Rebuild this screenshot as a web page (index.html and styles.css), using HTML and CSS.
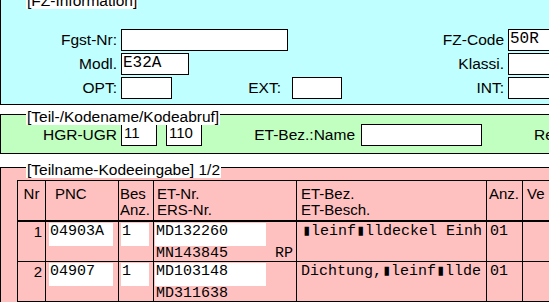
FILE: index.html
```html
<!DOCTYPE html>
<html lang="de">
<head>
<meta charset="utf-8">
<title>FZ-Information</title>
<link rel="stylesheet" href="styles.css">
</head>
<body>
<div class="page">
  <section class="group group-fz">
    <span class="legend">[FZ-Information]</span>
    <div class="row">
      <span class="lbl w116">Fgst-Nr:</span><span class="field mono w167"></span>
      <span class="lbl w216">FZ-Code</span><span class="field mono w45">50R</span>
    </div>
    <div class="row">
      <span class="lbl w116">Modl.</span><span class="field mono w68">E32A</span>
      <span class="lbl w315">Klassi.</span><span class="field mono w45"></span>
    </div>
    <div class="row">
      <span class="lbl w116">OPT:</span><span class="field mono w51"></span>
      <span class="lbl w109 gap11">EXT:</span><span class="field mono w50"></span>
      <span class="lbl w162">INT:</span><span class="field mono w45"></span>
    </div>
  </section>

  <section class="group group-kode">
    <span class="legend">[Teil-/Kodename/Kodeabruf]</span>
    <div class="row">
      <span class="lbl w116">HGR-UGR</span><span class="field sans w36">11</span>
      <span class="field sans w36 ml9">110</span>
      <span class="lbl w153 gap6">ET-Bez.:Name</span><span class="field sans w121"></span>
      <span class="lbl ml52">Re</span>
    </div>
  </section>

  <section class="group group-teil">
    <span class="legend">[Teilname-Kodeeingabe] 1/2</span>
    <div class="grid">
      <div class="hd center">Nr</div>
      <div class="hd pl9">PNC</div>
      <div class="hd pl1">Bes<br>Anz.</div>
      <div class="hd pl3">ET-Nr.<br>ERS-Nr.</div>
      <div class="hd pl4">ET-Bez.<br>ET-Besch.</div>
      <div class="hd pl2">Anz.</div>
      <div class="hd pl4">Ve</div>

      <div class="cell num">1</div>
      <div class="cell"><div class="box mono ml3 w64">04903A</div></div>
      <div class="cell"><div class="box mono ml2 w28">1</div></div>
      <div class="cell">
        <div class="box mono ml1 w111">MD132260</div>
        <div class="sub mono"><span>MN143845</span><span>RP</span></div>
      </div>
      <div class="cell mono pl5">▮leinf▮lldeckel Einh</div>
      <div class="cell mono pl3">01</div>
      <div class="cell"></div>

      <div class="cell num">2</div>
      <div class="cell"><div class="box mono ml3 w64">04907</div></div>
      <div class="cell"><div class="box mono ml2 w28">1</div></div>
      <div class="cell">
        <div class="box mono ml1 w111">MD103148</div>
        <div class="sub mono"><span>MD311638</span></div>
      </div>
      <div class="cell mono pl4">Dichtung,▮leinf▮llde</div>
      <div class="cell mono pl3">01</div>
      <div class="cell"></div>
    </div>
  </section>
</div>
</body>
</html>
```

FILE: styles.css
```css
html, body {
  margin: 0;
  padding: 0;
  background: #ffffff;
  overflow: hidden;
}

body {
  font-family: "Liberation Sans", Arial, sans-serif;
  color: #000000;
}

.page {
  width: 620px;
}

.group {
  position: relative;
  border: 1px solid #000000;
  width: 618px;
}

.group-fz {
  margin-top: -2px;
  background: #c0ffff;
  padding: 30px 0 5px 0;
  display: flex;
  flex-direction: column;
  gap: 2px;
}

.group-kode {
  margin-top: 9px;
  background: #c0ffc0;
  padding: 9px 0 7px 0;
}

.group-teil {
  margin-top: 13px;
  background: #ffc0c0;
  padding: 12px 0 0 16px;
  width: 602px;
  height: 200px;
}

.legend {
  position: absolute;
  top: -6px;
  left: 25px;
  padding: 0 1px;
  background: #ffffff;
  font-size: 15.5px;
  line-height: 16px;
  white-space: nowrap;
}

.row {
  display: flex;
  align-items: flex-start;
  height: 22px;
}

.lbl {
  flex: 0 0 auto;
  font-size: 15.5px;
  line-height: 22px;
  text-align: right;
  white-space: nowrap;
  margin-right: 4px;
}

.field {
  flex: 0 0 auto;
  box-sizing: border-box;
  height: 22px;
  border: 1px solid #000000;
  background: #ffffff;
  white-space: nowrap;
  overflow: hidden;
}

.field.mono {
  font-family: "Liberation Mono", "Courier New", monospace;
  font-size: 16px;
  line-height: 18px;
  padding-left: 1px;
}

.field.sans {
  font-size: 15px;
  line-height: 16px;
  padding-left: 2px;
}

.w116 { width: 116px; }
.w216 { width: 216px; }
.w315 { width: 315px; }
.w109 { width: 109px; }
.w162 { width: 162px; }
.w153 { width: 153px; }
.w167 { width: 167px; }
.w68 { width: 68px; }
.w51 { width: 51px; }
.w50 { width: 50px; }
.w45 { width: 45px; }
.w36 { width: 36px; }
.w121 { width: 121px; }
.w64 { width: 64px; }
.w28 { width: 28px; }
.w111 { width: 111px; }

.gap11 { margin-right: 11px; }
.gap6 { margin-right: 6px; }
.ml9 { margin-left: 9px; }
.ml52 { margin-left: 52px; }
.ml3 { margin-left: 3px; }
.ml2 { margin-left: 2px; }
.ml1 { margin-left: 1px; }

/* parts table */
.grid {
  display: grid;
  grid-template-columns: 28px 73px 35px 143px 190px 36px 80px;
  grid-template-rows: 41px 40px 40px;
  border-top: 1px solid #000000;
  border-left: 1px solid #000000;
  width: max-content;
}

.hd,
.cell {
  box-sizing: border-box;
  border-right: 1px solid #000000;
  border-bottom: 1px solid #000000;
  white-space: nowrap;
  overflow: hidden;
}

.hd {
  border-bottom-width: 2px;
  font-size: 15px;
  line-height: 16px;
  padding-top: 5px;
}

.cell {
  font-size: 15px;
  line-height: 18px;
  padding-top: 1px;
}

.center { text-align: center; }
.pl1 { padding-left: 1px; }
.pl2 { padding-left: 2px; }
.pl3 { padding-left: 3px; }
.pl4 { padding-left: 4px; }
.pl5 { padding-left: 5px; }
.pl9 { padding-left: 9px; }

.num {
  text-align: right;
  padding-right: 3px;
}

.mono {
  font-family: "Liberation Mono", "DejaVu Sans Mono", "Courier New", monospace;
}

.box {
  box-sizing: border-box;
  height: 23px;
  background: #ffffff;
  padding-left: 1px;
  font-size: 15px;
  line-height: 18px;
}

.sub {
  display: flex;
  justify-content: space-between;
  padding: 0 3px 0 2px;
  font-size: 15px;
  line-height: 15px;
}
```
